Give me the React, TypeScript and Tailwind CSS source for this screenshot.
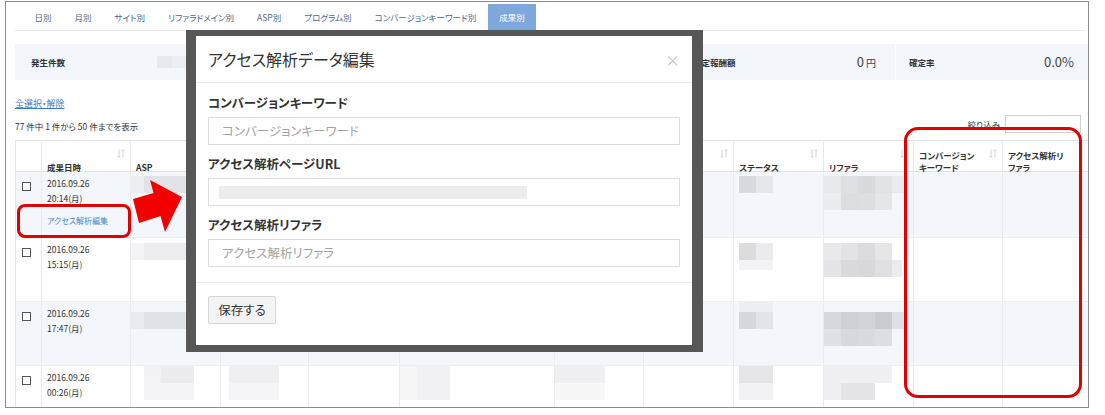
import React from "react";

type R = [number, number, number, number, string];

function Mosaic({ w, h, rects }: { w: number; h: number; rects: R[] }) {
  return (
    <svg width={w} height={h} className="block">
      {rects.map(([x, y, rw, rh, c], i) => (
        <rect key={i} x={x} y={y} width={rw} height={rh} fill={c} />
      ))}
    </svg>
  );
}

function SortIcon() {
  return (
    <svg width="8" height="9" viewBox="0 0 8 9" className="shrink-0 text-[#d4d4d4]">
      <path d="M2 0.5v8M0.6 6.8L2 8.4 3.4 6.8M6 8.5v-8M4.6 2.2L6 0.6 7.4 2.2" stroke="currentColor" fill="none" strokeWidth="1" />
    </svg>
  );
}

const tabs = ["日別", "月別", "サイト別", "リファラドメイン別", "ASP別", "プログラム別", "コンバージョンキーワード別", "成果別"];
const widths = [26, 89, 90, 88, 91, 155, 89, 90, 90, 90, 89, 100];
const headers = ["", "成果日時", "ASP", "", "", "", "", "", "ステータス", "リファラ", "コンバージョン\nキーワード", "アクセス解析リ\nファラ"];

const rows: { date: string; time: string; h: number; bg: boolean; link?: boolean; m: Record<number, R[]> }[] = [
  {
    date: "2016.09.26", time: "20:14(月)", h: 66, bg: true, link: true,
    m: {
      2: [[0, 4, 13, 17, "#eceef2"], [13, 4, 44, 17, "#e1e3e7"], [57, 4, 33, 17, "#eaecf0"]],
      8: [[5, 4, 17, 17, "#d9dadf"], [22, 4, 17, 17, "#e6e7eb"]],
      9: [[0, 4, 17, 17, "#e7e8ec"], [17, 4, 17, 17, "#dfe0e4"], [34, 4, 17, 17, "#d9dade"], [51, 4, 17, 17, "#e2e3e7"], [68, 4, 12, 17, "#eaebee"], [0, 21, 17, 17, "#ebecef"], [17, 21, 17, 17, "#dcdde1"], [34, 21, 17, 17, "#dddee2"], [51, 21, 17, 17, "#e5e6ea"]],
    },
  },
  {
    date: "2016.09.26", time: "15:15(月)", h: 64, bg: false,
    m: {
      2: [[0, 5, 13, 17, "#f4f4f6"], [13, 5, 44, 17, "#ededef"]],
      8: [[5, 5, 17, 17, "#dcdcdf"], [22, 5, 17, 17, "#ebebed"], [5, 22, 34, 10, "#f3f3f5"]],
      9: [[0, 5, 17, 17, "#e9e9eb"], [17, 5, 17, 17, "#e3e3e5"], [34, 5, 17, 17, "#dcdcde"], [51, 5, 17, 17, "#e6e6e8"], [0, 22, 17, 17, "#e4e4e6"], [17, 22, 17, 17, "#dadadc"], [34, 22, 17, 17, "#d8d8da"], [51, 22, 17, 17, "#e0e0e2"], [68, 22, 10, 17, "#ececee"]],
    },
  },
  {
    date: "2016.09.26", time: "17:47(月)", h: 64, bg: true,
    m: {
      2: [[0, 10, 13, 17, "#e9ebef"], [13, 10, 44, 17, "#dfe2e7"], [57, 10, 33, 17, "#e8eaee"]],
      8: [[5, -2, 34, 12, "#eceef2"], [5, 10, 17, 17, "#d5d7dd"], [22, 10, 17, 17, "#e2e4e9"]],
      9: [[0, 10, 17, 17, "#d6d8de"], [17, 10, 17, 17, "#cfd1d7"], [34, 10, 17, 17, "#d2d4da"], [51, 10, 17, 17, "#c9cbd1"], [68, 10, 12, 17, "#dfe1e6"], [0, 27, 17, 17, "#dfe1e6"], [17, 27, 17, 17, "#d6d8de"], [34, 27, 17, 17, "#d8dadf"], [51, 27, 17, 17, "#dcdee3"]],
    },
  },
  {
    date: "2016.09.26", time: "00:26(月)", h: 44, bg: false,
    m: {
      2: [[13, 0, 17, 17, "#f2f2f4"], [30, 0, 33, 17, "#ececee"], [13, 17, 50, 17, "#f4f4f6"]],
      3: [[8, 0, 50, 17, "#efeff1"], [8, 17, 50, 17, "#f5f5f7"]],
      5: [[0, 0, 17, 34, "#f6f6f7"], [17, 0, 33, 34, "#f1f1f3"]],
      6: [[0, 0, 50, 17, "#f0f0f2"], [0, 17, 50, 17, "#f7f7f8"]],
      8: [[5, 0, 34, 17, "#e6e6e8"], [5, 17, 34, 17, "#f2f2f4"]],
      9: [[0, 0, 68, 17, "#f0f0f2"], [17, 17, 34, 17, "#e5e5e7"], [0, 17, 17, 17, "#f0f0f2"]],
    },
  },
];

export default function App() {
  return (
    <div className="relative w-[1105px] h-[415px] bg-white overflow-hidden font-['Noto_Sans_CJK_JP','Noto_Sans',sans-serif] [font-feature-settings:'palt'] text-[#333]">
      {/* frame */}
      <div className="ml-[5px] mt-[1px] w-[1084px] h-[407px] border border-[#8c8c8c] overflow-hidden pl-[9px]">
        {/* tabs */}
        <div className="mr-[2px] pt-[2px] flex border-b border-[#e9e9e9]">
          <div className="ml-[8px] flex">
            {tabs.map((t, i) => (
              <div
                key={t}
                className={
                  i === tabs.length - 1
                    ? "h-[26px] px-[11.5px] flex items-center text-[8.5px] bg-[#7ea8da] text-white"
                    : "h-[26px] px-[11.5px] flex items-center text-[8.5px] text-[#4a6a8c]"
                }
              >
                {t}
              </div>
            ))}
          </div>
        </div>

        {/* summary */}
        <div className="mt-[13px] h-[36px] bg-[#f3f6fa] flex items-center">
          <div className="w-[670px] pl-[16px] flex items-center">
            <div className="w-[126px] text-[8.5px] font-bold">発生件数</div>
            <Mosaic w={29} h={12} rects={[[0, 0, 15, 12, "#e6e8ec"], [15, 0, 14, 12, "#eceef1"]]} />
          </div>
          <div className="w-[210px] pl-[8px] pr-[19px] flex items-center justify-between">
            <div className="text-[8.5px] font-bold">確定報酬額</div>
            <div className="text-[13px] text-[#444]">
              0<span className="text-[10px] ml-[2px]">円</span>
            </div>
          </div>
          <div className="flex-1 h-full border-l border-white pl-[13px] pr-[14px] flex items-center justify-between">
            <div className="text-[8.5px] font-bold">確定率</div>
            <div className="text-[13px] text-[#444]">0.0%</div>
          </div>
        </div>

        {/* controls */}
        <div className="mt-[17px] text-[9px] leading-[14px] text-[#3a7dc2] underline">全選択・解除</div>
        <div className="mt-[4px] h-[18px] pr-[7px] flex items-center justify-between">
          <div className="pt-[4px] text-[8.5px] leading-[14px]">77 件中 1 件から 50 件までを表示</div>
          <div className="flex items-center gap-[5px]">
            <div className="text-[8.5px]">絞り込み</div>
            <div className="w-[76px] h-[18px] border border-[#cfcfcf] bg-white" />
          </div>
        </div>

        {/* table */}
        <div className="mt-[7px] w-[1088px] border-l border-[#e6e6e6]">
          <div className="grid grid-cols-[26px_89px_90px_88px_91px_155px_89px_90px_90px_90px_89px_100px] h-[32px] border-t border-b border-[#e3e3e3] bg-white">
            {headers.map((h, i) => (
              <div key={i} className="flex justify-between px-[5px] pt-[8px] pb-[3px] border-r border-[#e8e8e8]">
                <div className="self-end text-[8.5px] font-bold leading-[12px] whitespace-pre">{h}</div>
                {i > 0 && <SortIcon />}
              </div>
            ))}
          </div>
          {rows.map((r, ri) => (
            <div
              key={ri}
              className={
                r.bg
                  ? "grid grid-cols-[26px_89px_90px_88px_91px_155px_89px_90px_90px_90px_89px_100px] border-b border-[#eceef2] bg-[#f3f6fa]"
                  : "grid grid-cols-[26px_89px_90px_88px_91px_155px_89px_90px_90px_90px_89px_100px] border-b border-[#eceef2] bg-white"
              }
              style={{ height: r.h }}
            >
              {widths.map((w, ci) => {
                if (ci === 0)
                  return (
                    <div key={ci} className="pl-[6px] pt-[10px] border-r border-[#ebebeb]">
                      <div className="w-[9px] h-[9px] border border-[#555] bg-white" />
                    </div>
                  );
                if (ci === 1)
                  return (
                    <div key={ci} className="pl-[5px] pt-[4px] border-r border-[#ebebeb] text-[8.5px] leading-[15px]">
                      <div>{r.date}</div>
                      <div>{r.time}</div>
                      {r.link && <div className="mt-[7px] text-[8px] text-[#4b87c4]">アクセス解析編集</div>}
                    </div>
                  );
                return (
                  <div key={ci} className="border-r border-[#ebebeb] overflow-hidden">
                    {r.m[ci] && <Mosaic w={w - 1} h={r.h} rects={r.m[ci]} />}
                  </div>
                );
              })}
            </div>
          ))}
        </div>
      </div>

      {/* modal */}
      <div className="absolute left-[186px] top-[30px] w-[517px] h-[322px] bg-white border-[#575757] border-l-[10px] border-r-[11px] border-t-[6px] border-b-[7px] flex flex-col">
        <div className="h-[47px] shrink-0 border-b border-[#e8e8e8] flex items-center justify-between pl-[12px] pr-[12px]">
          <div className="text-[16px] text-[#333]">アクセス解析データ編集</div>
          <div className="text-[15px] text-[#c4c4c4] leading-none">×</div>
        </div>
        <div className="px-[12px] pt-[10px] pb-[15px]">
          <div className="h-[20px] flex items-center text-[12.5px] font-bold">コンバージョンキーワード</div>
          <div className="mt-[4px] h-[28px] border border-[#dcdcdc] flex items-center pl-[13px] text-[12.5px] text-[#a3a3a3]">コンバージョンキーワード</div>
          <div className="mt-[9px] h-[20px] flex items-center text-[12.5px] font-bold">アクセス解析ページURL</div>
          <div className="mt-[4px] h-[28px] border border-[#dcdcdc] flex items-center pl-[10px]">
            <div className="w-[308px] h-[13px] bg-[#ececec]" />
          </div>
          <div className="mt-[9px] h-[20px] flex items-center text-[12.5px] font-bold">アクセス解析リファラ</div>
          <div className="mt-[4px] h-[28px] border border-[#dcdcdc] flex items-center pl-[13px] text-[12.5px] text-[#a3a3a3]">アクセス解析リファラ</div>
        </div>
        <div className="flex-1 border-t border-[#ececec] px-[12px] pt-[13px]">
          <div className="w-[68px] h-[28px] border border-[#d6d6d6] bg-[#f4f4f4] rounded-[2px] flex items-center justify-center text-[12.5px] text-[#333]">保存する</div>
        </div>
      </div>

      {/* annotations */}
      <svg className="absolute left-[130px] top-[176px]" width="56" height="60">
        <polygon points="3,23 23.5,17 20,4 52,21 35,56 30.5,40 9,47" fill="#f20000" />
      </svg>
      <div className="absolute left-[17px] top-[204px] w-[114px] h-[34px] border-[3px] border-[#e00000] rounded-[8px]" />
      <div className="absolute left-[904px] top-[127px] w-[178px] h-[271px] border-[3px] border-[#e00000] rounded-[14px]" />
    </div>
  );
}
